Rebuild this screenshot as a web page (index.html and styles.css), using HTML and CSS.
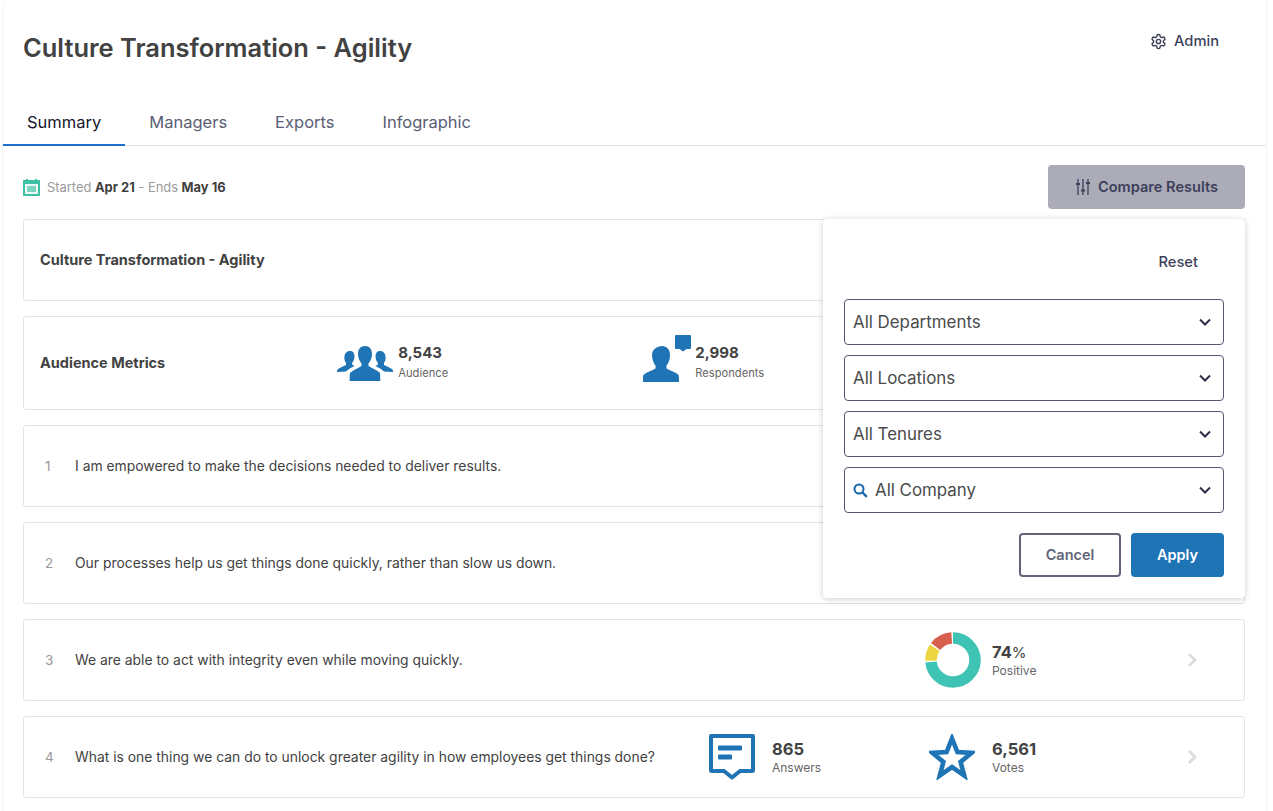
FILE: index.html
```html
<!DOCTYPE html>
<html lang="en">
<head>
<meta charset="utf-8">
<title>Culture Transformation - Agility</title>
<link rel="stylesheet" href="styles.css">
</head>
<body>
<div class="page">
  <header class="top">
    <h1 class="title">Culture Transformation - Agility</h1>
    <a class="admin">
      <svg class="gear" viewBox="0 0 24 24" width="17" height="17" fill="none" stroke="#3d3f5a" stroke-width="2" stroke-linejoin="round"><path d="M12.220 2h-.44a2 2 0 0 0-2 2v.18a2 2 0 0 1-1 1.730l-.43.25a2 2 0 0 1-2 0l-.15-.08a2 2 0 0 0-2.730.73l-.22.38a2 2 0 0 0 .73 2.730l.15.1a2 2 0 0 1 1 1.720v.51a2 2 0 0 1-1 1.740l-.15.09a2 2 0 0 0-.73 2.730l.22.38a2 2 0 0 0 2.730.73l.15-.08a2 2 0 0 1 2 0l.43.25a2 2 0 0 1 1 1.730V20a2 2 0 0 0 2 2h.44a2 2 0 0 0 2-2v-.18a2 2 0 0 1 1-1.730l.43-.25a2 2 0 0 1 2 0l.15.08a2 2 0 0 0 2.730-.73l.22-.39a2 2 0 0 0-.73-2.730l-.15-.08a2 2 0 0 1-1-1.740v-.5a2 2 0 0 1 1-1.740l.15-.09a2 2 0 0 0 .73-2.730l-.22-.38a2 2 0 0 0-2.730-.73l-.15.08a2 2 0 0 1-2 0l-.43-.25a2 2 0 0 1-1-1.730V4a2 2 0 0 0-2-2z"/><circle cx="12" cy="12" r="3"/></svg>
      Admin
    </a>
  </header>
  <nav class="tabs">
    <a class="tab active">Summary</a>
    <a class="tab">Managers</a>
    <a class="tab">Exports</a>
    <a class="tab">Infographic</a>
  </nav>
  <main class="content">
    <div class="datebar">
      <div class="dates">
        <svg viewBox="0 0 17 17" width="17" height="17"><rect x="0" y="1" width="17" height="16" rx="1" fill="#3dbfa5"/><rect x="2" y="5" width="13" height="10" fill="#fff" opacity=".9"/><rect x="3" y="0" width="2" height="3" fill="#3dbfa5"/><rect x="12" y="0" width="2" height="3" fill="#3dbfa5"/><rect x="4" y="7" width="9" height="6" fill="#7ed3c2"/></svg>
        <span>Started <b>Apr 21</b> - Ends <b>May 16</b></span>
      </div>
      <button class="compare">
        <svg viewBox="0 0 16 18" width="16" height="18"><path d="M3 1v16M8 1v16M13 1v16" stroke="#3d3f5a" stroke-width="1.300"/><path d="M1 6h4M6 12.500h4M11 5h4" stroke="#3d3f5a" stroke-width="2"/></svg>
        Compare Results
      </button>
    </div>
    <div class="stack">
      <section class="card card-title"><h2>Culture Transformation - Agility</h2></section>
      <section class="card card-metrics">
        <h2>Audience Metrics</h2>
        <div class="metric m-aud">
          <svg viewBox="0 0 56 36" width="56" height="36" fill="#1f74b6"><path d="M28 1c4.500 0 7 3 7 8 0 4-1.500 7-3.500 9.500v2.500c4 2.500 8 4 11 6.500.8.700.8 1.500.8 8.500H12.700c0-7 0-7.800.8-8.500 3-2.500 7-4 11-6.500v-2.500C22.500 16 21 13 21 9c0-5 2.500-8 7-8z"/><path d="M13 6c3 0 4.500 2 4.500 5.500 0 2.500-1 4.800-2.300 6.300v2l2.300 1.200c-3 1.800-6.500 3.300-8.500 5.500L0 27c0-2 .5-2.500 1.500-3.200 2.500-1.500 5-2.500 7.500-3.800v-2.200C7.700 16.300 7 14 7.500 11.500 7.800 8 10 6 13 6zM43 6c-3 0-4.500 2-4.500 5.500 0 2.500 1 4.800 2.300 6.300v2l-2.300 1.200c3 1.800 6.500 3.300 8.500 5.500L56 27c0-2-.5-2.500-1.500-3.200-2.500-1.500-5-2.500-7.500-3.800v-2.200c1.300-1.500 2-3.800 1.500-6.300C48.200 8 46 6 43 6z"/></svg>
          <div class="stat tall"><strong>8,543</strong><small>Audience</small></div>
        </div>
        <div class="metric m-res">
          <svg class="res-icon" viewBox="0 0 48 47" width="48" height="47" fill="#1f74b6"><path d="M21 11c5 0 8 3.500 8 9 0 4.500-1.500 8-3.500 10.500v3c3.500 2 8 3.500 11 5.500 1.500 1 1.500 2 1.500 8H2c0-6 0-7 1.500-8 3-2 7.500-3.500 11-5.500v-3C12.500 28 11 24.500 11 20c0-5.500 5-9 10-9z" transform="translate(-2 0)"/><path d="M32 1a1 1 0 0 1 1-1h14a1 1 0 0 1 1 1v12a1 1 0 0 1-1 1h-3.500L40 16.500 36.500 14H33a1 1 0 0 1-1-1z"/></svg>
          <div class="stat tall"><strong>2,998</strong><small>Respondents</small></div>
        </div>
      </section>
      <section class="card card-q"><span class="num">1</span><p>I am empowered to make the decisions needed to deliver results.</p></section>
      <section class="card card-q"><span class="num">2</span><p>Our processes help us get things done quickly, rather than slow us down.</p></section>
      <section class="card card-q">
        <span class="num">3</span><p>We are able to act with integrity even while moving quickly.</p>
        <div class="q-stat q3">
          <svg class="donut" viewBox="0 0 56 56" width="56" height="56">
            <g fill="none" stroke-width="11.500" transform="rotate(-90 28 28)">
              <circle cx="28" cy="28" r="22" stroke="#3fc3b5" pathLength="100" stroke-dasharray="73.500 26.500" stroke-dashoffset="0"/>
              <circle cx="28" cy="28" r="22" stroke="#edd542" pathLength="100" stroke-dasharray="10 90" stroke-dashoffset="-74.500"/>
              <circle cx="28" cy="28" r="22" stroke="#d65f4d" pathLength="100" stroke-dasharray="13.500 86.500" stroke-dashoffset="-85.500"/>
            </g>
          </svg>
          <div class="stat"><strong>74<i>%</i></strong><small>Positive</small></div>
        </div>
        <svg class="chev" viewBox="0 0 11 16" width="11" height="16"><path d="M2 2l6 6-6 6" fill="none" stroke="#dcdcdc" stroke-width="2.800"/></svg>
      </section>
      <section class="card card-q">
        <span class="num">4</span><p>What is one thing we can do to unlock greater agility in how employees get things done?</p>
        <div class="q-stat q4a">
          <svg viewBox="0 0 46 46" width="46" height="46"><path d="M2 2h42v34a1 1 0 0 1-1 1H31l-8 6.500-8-6.500H3a1 1 0 0 1-1-1z" fill="none" stroke="#1f74b6" stroke-width="4" stroke-linejoin="round"/><rect x="9" y="11.500" width="24" height="5" rx="1" fill="#1f74b6"/><rect x="9" y="20.500" width="14" height="5" rx="1" fill="#1f74b6"/></svg>
          <div class="stat"><strong>865</strong><small>Answers</small></div>
        </div>
        <div class="q-stat q4b">
          <svg viewBox="0 0 46 46" width="46" height="46"><path d="M23 4.500l5.400 13.500 14.100.9-10.900 9 3.600 13.600L23 33l-12.200 8.500 3.600-13.600-10.900-9 14.100-.9z" fill="none" stroke="#1f74b6" stroke-width="4.600"/></svg>
          <div class="stat"><strong>6,561</strong><small>Votes</small></div>
        </div>
        <svg class="chev" viewBox="0 0 11 16" width="11" height="16"><path d="M2 2l6 6-6 6" fill="none" stroke="#dcdcdc" stroke-width="2.800"/></svg>
      </section>
    </div>
    <aside class="popup">
      <div class="reset-row"><a class="reset">Reset</a></div>
      <div class="select"><span>All Departments</span><svg class="caret" viewBox="0 0 12 8" width="12" height="8"><path d="M1 1.500l5 5 5-5" fill="none" stroke="#2d2f4a" stroke-width="2"/></svg></div>
      <div class="select"><span>All Locations</span><svg class="caret" viewBox="0 0 12 8" width="12" height="8"><path d="M1 1.500l5 5 5-5" fill="none" stroke="#2d2f4a" stroke-width="2"/></svg></div>
      <div class="select"><span>All Tenures</span><svg class="caret" viewBox="0 0 12 8" width="12" height="8"><path d="M1 1.500l5 5 5-5" fill="none" stroke="#2d2f4a" stroke-width="2"/></svg></div>
      <div class="select"><svg class="search" viewBox="0 0 15 15" width="15" height="15"><circle cx="6" cy="6" r="4.500" fill="none" stroke="#1a66ae" stroke-width="2"/><path d="M9.500 9.500l4.300 4.300" stroke="#1a66ae" stroke-width="2.400"/></svg><span>All Company</span><svg class="caret" viewBox="0 0 12 8" width="12" height="8"><path d="M1 1.500l5 5 5-5" fill="none" stroke="#2d2f4a" stroke-width="2"/></svg></div>
      <div class="actions"><button class="btn cancel">Cancel</button><button class="btn apply">Apply</button></div>
    </aside>
  </main>
</div>
</body>
</html>
```
FILE: styles.css
```css
* { box-sizing: border-box; }
html, body { margin: 0; height: 811px; overflow: hidden; background: #fff; }
body { font-family: Inter, "Liberation Sans", sans-serif; color: #3f3f3f; }
.page { width: 1265px; height: 811px; margin-left: 2px; border-left: 1px solid #f4f4f4; border-right: 1px solid #f4f4f4; border-top-left-radius: 8px; }
.top { height: 96px; padding: 0 47px 0 20px; display: flex; justify-content: space-between; align-items: flex-start; }
.title { margin: 30px 0 0; font: 600 25.480px/36px Inter, sans-serif; color: #424242; }
.admin { margin-top: 31px; display: flex; align-items: center; gap: 7px; font: 500 14.700px/20px Inter, sans-serif; color: #3d3f5a; }
.tabs { height: 50px; display: flex; border-bottom: 1px solid #e3e3e6; }
.tab { padding: 14px 24px 0; font: 400 16.500px/24px Inter, sans-serif; color: #5a5d74; }
.tab.active { color: #14162e; border-bottom: 2px solid #1f6fd0; height: 50px; }
.content { position: relative; padding: 19px 21px 0 20px; }
.datebar { height: 44px; display: flex; justify-content: space-between; align-items: center; margin-bottom: 10px; }
.dates { display: flex; align-items: center; gap: 7px; font-size: 12.900px; color: #9a9a9a; }
.dates b { color: #3f3f3f; font-weight: 700; }
.compare { width: 197px; height: 44px; padding: 0; border: 0; border-radius: 4px; background: #abacb8; color: #3d3f5a; font: 600 14.600px Inter, sans-serif; display: flex; align-items: center; justify-content: center; gap: 7px; }
.stack { display: flex; flex-direction: column; gap: 15px; }
.card { border: 1px solid #e3e3e3; border-radius: 3px; height: 82px; display: flex; align-items: center; padding-left: 16px; }
.card h2 { margin: 0; font: 700 14.500px/20px Inter, sans-serif; color: #424242; }
.card-metrics { height: 94px; position: relative; }
.metric { display: flex; align-items: center; gap: 5px; }
.m-aud { margin-left: 172px; }
.m-res { margin-left: 195px; }
.res-icon { margin: -9px -1px 0 0; }
.stat { display: flex; flex-direction: column; padding-top: 2px; }
.stat strong { font: 700 16.500px/19px Inter, sans-serif; color: #424242; }
.stat i { font-style: normal; font-weight: 400; font-size: 15px; }
.stat small { font: 400 12px/18px Inter, sans-serif; color: #666; }
.tall { padding-top: 1px; }
.tall strong { font-size: 15px; line-height: 19px; }
.tall small { font-size: 11.200px; line-height: 23px; }
.num { width: 35px; font-size: 13.500px; color: #999; padding-left: 5px; }
.card-q p { margin: 0; font-size: 13.900px; color: #424242; }
.q-stat { display: flex; align-items: center; gap: 11px; position: absolute; }
.card-q { position: relative; }
.q3 { left: 901px; }
.q4a { left: 685px; gap: 17px; }
.q4b { left: 905px; gap: 17px; }
.chev { position: absolute; right: 46px; }
.popup { position: absolute; left: 820px; top: 73px; width: 422px; height: 379px; background: #fff; border-radius: 4px; box-shadow: 0 1px 6px rgba(0,0,0,.2); padding: 0 21px; }
.reset-row { height: 80px; padding: 33px 26px 0 0; display: flex; justify-content: flex-end; }
.reset { font: 500 14.700px/20px Inter, sans-serif; color: #3d3f5a; }
.select { height: 46px; margin-bottom: 10px; border: 1px solid #55576e; border-radius: 4px; display: flex; align-items: center; padding: 0 12px 1px 8px; font-size: 16.900px; color: #4a4a4a; }
.select .caret { margin-top: 1px; }
.select span { flex: 1; }
.search { margin: 1px 7px 0 0; }
.actions { display: flex; justify-content: flex-end; gap: 10px; margin-top: 20px; }
.btn { height: 44px; padding: 0 0 2px; border-radius: 4px; font: 600 14.500px Inter, sans-serif; }
.cancel { width: 102px; background: #fff; border: 2px solid #62647a; color: #62647a; }
.apply { width: 93px; background: #1f74b6; border: 0; color: #fff; }
```
